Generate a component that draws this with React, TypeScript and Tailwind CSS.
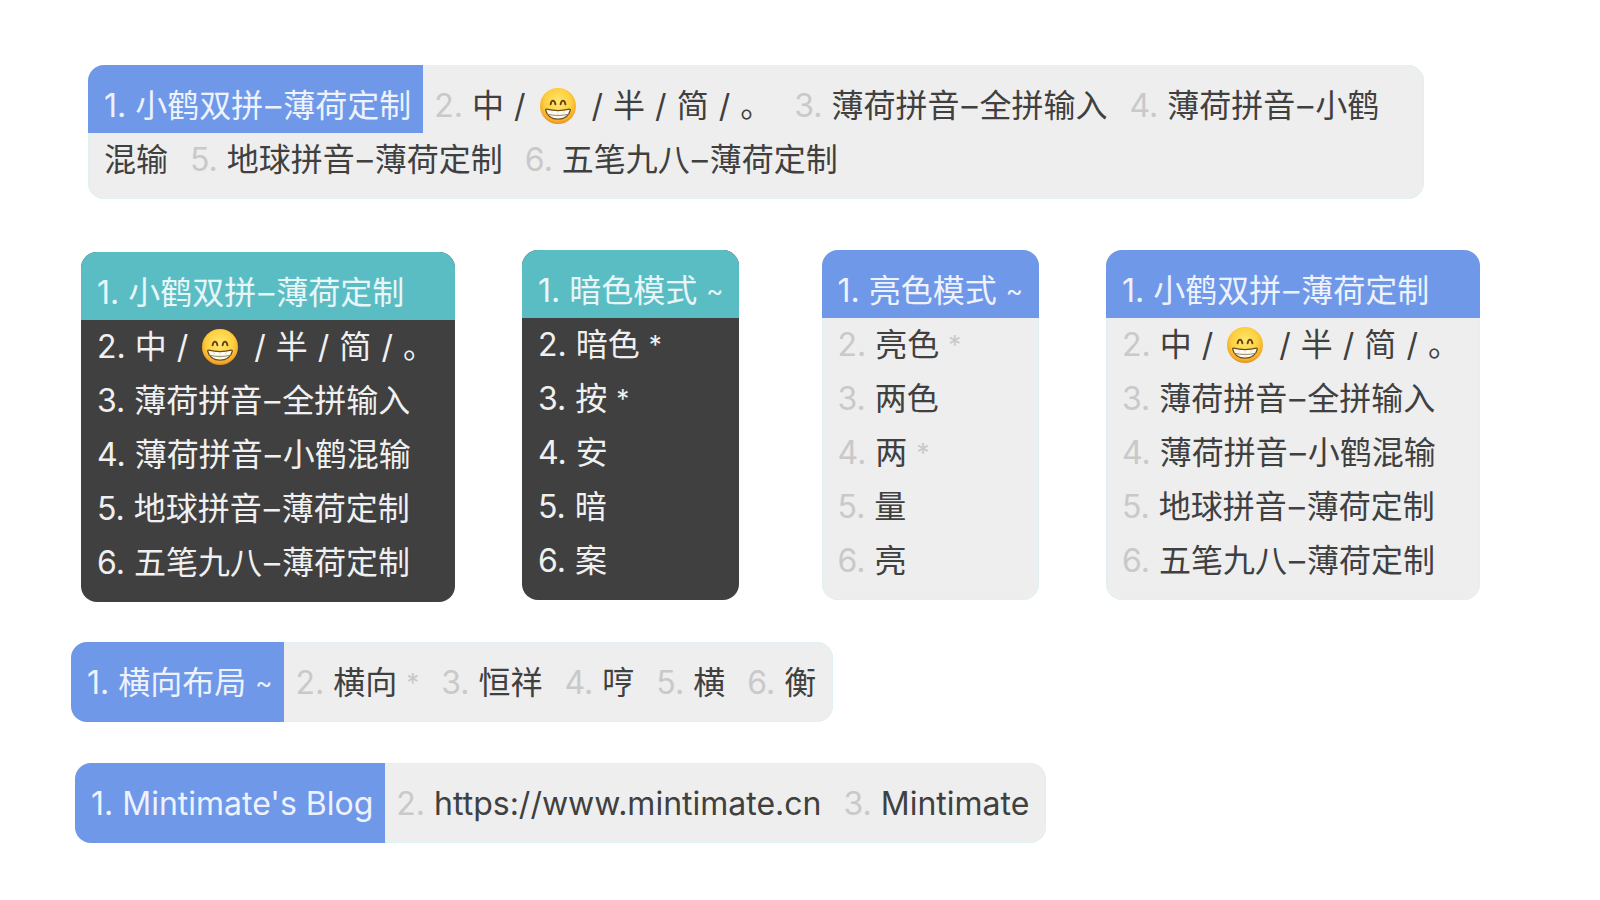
import { clsx } from "clsx";

type Tone = "light" | "dark";

interface Candidate {
  text: string;
  comment?: string;
}

interface PanelProps {
  items: Candidate[];
  tone?: Tone;
}

const schemas: Candidate[] = [
  { text: "小鹤双拼–薄荷定制" },
  { text: "中 / 😁 / 半 / 简 / 。" },
  { text: "薄荷拼音–全拼输入" },
  { text: "薄荷拼音–小鹤混输" },
  { text: "地球拼音–薄荷定制" },
  { text: "五笔九八–薄荷定制" },
];

const darkWords: Candidate[] = [
  { text: "暗色模式", comment: "~" },
  { text: "暗色", comment: "*" },
  { text: "按", comment: "*" },
  { text: "安" },
  { text: "暗" },
  { text: "案" },
];

const lightWords: Candidate[] = [
  { text: "亮色模式", comment: "~" },
  { text: "亮色", comment: "*" },
  { text: "两色" },
  { text: "两", comment: "*" },
  { text: "量" },
  { text: "亮" },
];

const rowWords: Candidate[] = [
  { text: "横向布局", comment: "~" },
  { text: "横向", comment: "*" },
  { text: "恒祥" },
  { text: "哼" },
  { text: "横" },
  { text: "衡" },
];

const blogWords: Candidate[] = [
  { text: "Mintimate's Blog" },
  { text: "https://www.mintimate.cn" },
  { text: "Mintimate" },
];

function Grin() {
  return (
    <svg viewBox="0 0 36 36" className="-mt-1 mr-1.5 ml-1 inline-block size-9 align-middle" role="img" aria-label="😁">
      <defs>
        <radialGradient id="face" cx="0.5" cy="0.4" r="0.62">
          <stop offset="0" stopColor="#ffe873" />
          <stop offset="0.6" stopColor="#fdd03f" />
          <stop offset="0.85" stopColor="#f6ac2a" />
          <stop offset="1" stopColor="#dd8420" />
        </radialGradient>
      </defs>
      <circle cx="18" cy="18" r="18" fill="url(#face)" />
      <path
        d="M10.600 16.400c.4-2.600 1.300-3.800 2.400-3.800s2 1.200 2.400 3.800M20.600 16.400c.4-2.600 1.300-3.800 2.400-3.800s2 1.200 2.400 3.800"
        fill="none"
        stroke="#6b3f10"
        strokeWidth="1.9"
        strokeLinecap="round"
      />
      <path
        d="M6.600 21.200c7.300 1.700 15.500 1.700 22.800 0 .7-.1 1 .3.9.9-1 5.600-6 9.100-12.300 9.100S6.700 27.700 5.700 22.100c-.1-.6.2-1 .9-.9z"
        fill="#fffdf2"
        stroke="#6f4a18"
        strokeWidth="1.3"
      />
      <path d="M7.300 26.200c6.600 1.700 14.800 1.700 21.400 0" fill="none" stroke="#8f8568" strokeWidth="1" />
      <path d="M12 22.800v7.200M18 23v8M24 22.800v7.200" fill="none" stroke="#cfc9b4" strokeWidth="0.5" />
    </svg>
  );
}

// Separators between schema names get a little air on both sides
function CandidateText({ text }: { text: string }) {
  return text.split(/(😁|–| \/ )/).map((part, i) => {
    if (part === "😁") return <Grin key={i} />;
    if (part === "–" || part === " / ") {
      return (
        <span key={i} className={part === "–" ? "px-[2px]" : "px-px"}>
          {part}
        </span>
      );
    }
    return part;
  });
}

function Entry({ item, index, tone = "light" }: { item: Candidate; index: number; tone?: Tone }) {
  const muted = index > 0 && tone === "light" && "text-[#c9c9c9]";

  return (
    <>
      <span className={clsx(muted)}>{`${index + 1}. `}</span>
      <CandidateText text={item.text} />
      {item.comment && (
        <>
          {" "}
          <span className={clsx("align-[2px] text-[26px] leading-none", muted)}>{item.comment}</span>
        </>
      )}
    </>
  );
}

const lightPanel = "bg-[#eeeeee] text-[#404040] shadow-[inset_0_0_0_1px_#e0f1f3]";
const darkPanel = "bg-[#404040] text-[#f0f0f0]";

function WrapPanel({ items }: PanelProps) {
  return (
    <ol className={clsx("overflow-hidden rounded-2xl px-4 pb-3", lightPanel)}>
      {items.map((item, i) => (
        <li
          key={item.text}
          className={i === 0 ? "-ml-4 inline-block bg-[#7098e8] pt-3.5 pr-3 pl-4 text-[#edf2fd]" : "inline px-[11px]"}
        >
          <Entry item={item} index={i} />
        </li>
      ))}
    </ol>
  );
}

function ColumnPanel({ items, tone = "light", className }: PanelProps & { className?: string }) {
  return (
    <ol
      className={clsx(
        "overflow-hidden rounded-2xl pb-3 whitespace-nowrap",
        tone === "dark" ? darkPanel : lightPanel,
        className,
      )}
    >
      {items.map((item, i) => (
        <li
          key={item.text}
          className={clsx(
            "px-4",
            i === 0 && "pt-3.5",
            i === 0 && (tone === "dark" ? "bg-[#5bbdc4] text-[#e8f6f8]" : "bg-[#7098e8] text-[#edf2fd]"),
          )}
        >
          <Entry item={item} index={i} tone={tone} />
        </li>
      ))}
    </ol>
  );
}

function RowPanel({ items }: PanelProps) {
  return (
    <ol className={clsx("flex w-fit overflow-hidden rounded-2xl pr-1.5 whitespace-nowrap", lightPanel)}>
      {items.map((item, i) => (
        <li
          key={item.text}
          className={clsx("pt-3.5 pb-3", i === 0 ? "bg-[#7098e8] pr-3 pl-4 text-[#edf2fd]" : "px-[11px]")}
        >
          <Entry item={item} index={i} />
        </li>
      ))}
    </ol>
  );
}

export default function App() {
  return (
    <main
      className="min-h-screen bg-white pt-[65px] pb-14 font-['Inter','Noto_Sans_CJK_SC',sans-serif] text-[32px] leading-[54px]"
      lang="zh-CN"
    >
      <section className="mr-44 ml-[88px]">
        <WrapPanel items={schemas} />
      </section>

      <section className="mt-[51px] mr-[120px] ml-[81px] flex justify-between">
        <div className="flex items-start gap-[67px]">
          <ColumnPanel items={schemas} tone="dark" className="mt-0.5 min-w-[374px]" />
          <ColumnPanel items={darkWords} tone="dark" />
        </div>
        <div className="flex items-start gap-[67px]">
          <ColumnPanel items={lightWords} />
          <ColumnPanel items={schemas} className="min-w-[374px]" />
        </div>
      </section>

      <section className="mt-10 ml-[71px]">
        <RowPanel items={rowWords} />
      </section>

      <section className="mt-[41px] ml-[75px]">
        <RowPanel items={blogWords} />
      </section>
    </main>
  );
}
